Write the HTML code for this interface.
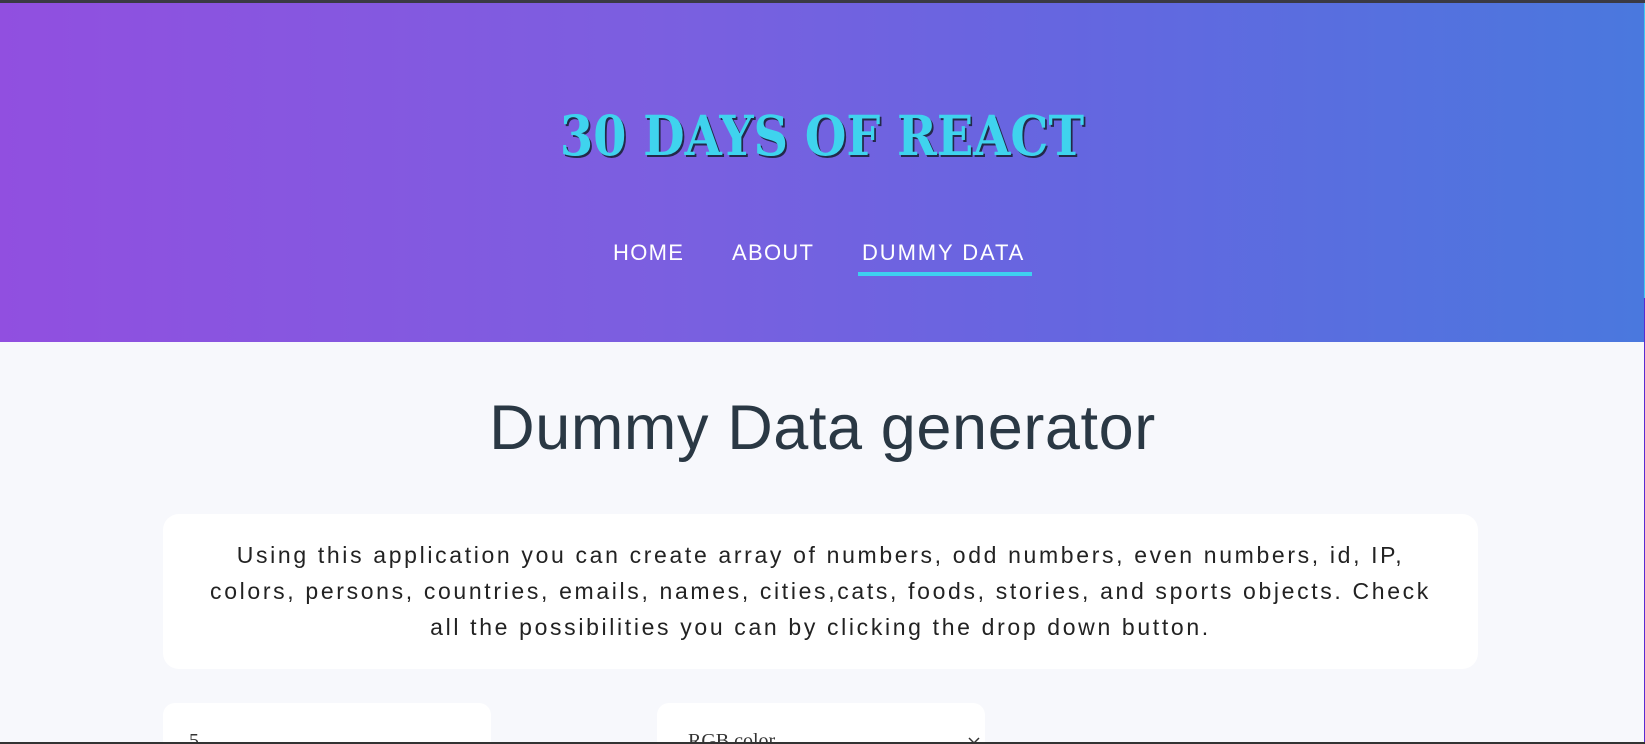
<!DOCTYPE html>
<html><head><meta charset="utf-8"><style>
*{margin:0;padding:0;box-sizing:border-box}
html{width:1645px;height:744px;overflow:hidden}
body{width:1645px;height:744px;overflow:hidden;background:#f7f8fc;position:relative;font-family:"Liberation Sans",sans-serif}
.top{position:absolute;left:0;top:0;width:1645px;height:3px;background:#3a3a44}
header{position:absolute;left:0;top:3px;width:1644px;height:339px;background:linear-gradient(90deg,#914fe0 0%,#7b5fe0 40%,#6566e0 65%,#4a78de 100%)}
h1.t{position:absolute;left:0;width:1644px;top:103px;text-align:center;font-family:"DejaVu Serif","Liberation Serif",serif;font-weight:bold;font-size:55px;color:#3fd3ee;text-shadow:2px 2px 0 #23294a;letter-spacing:0;line-height:66px;transform:scaleX(0.87);transform-origin:822px 0}
.nav{position:absolute;top:240px;font-size:22px;color:#fff;letter-spacing:1.3px;line-height:26px}
.ul{position:absolute;left:858px;top:272px;width:174px;height:4px;background:#3ed0f0}
h2{position:absolute;left:0;width:1645px;top:392px;text-align:center;font-weight:normal;font-size:63px;color:#2a3844;letter-spacing:0.6px;line-height:72px}
.card{position:absolute;left:163px;top:514px;width:1315px;height:155px;background:#fff;border-radius:16px}
.card p{position:absolute;left:-20px;width:1355px;text-align:center;font-size:23px;color:#222;letter-spacing:2.65px;line-height:36px;top:23px}
.box{position:absolute;top:703px;width:328px;height:39px;background:#fff;border-radius:12px 12px 0 0}
.v{position:absolute;top:731px;font-family:"Liberation Serif",serif;font-size:20px;color:#333;line-height:20px}
.sb{position:absolute;left:1644px;top:3px;width:1px;height:295px;background:#41c8f0}
.sb2{position:absolute;left:1644px;top:298px;width:1px;height:446px;background:#5b2bd0}
.bot{position:absolute;left:0;top:742px;width:1645px;height:2px;background:#333;z-index:5}
</style></head><body>
<div class="top"></div>
<header></header>
<h1 class="t">30 DAYS OF REACT</h1>
<div class="nav" style="left:613px">HOME</div>
<div class="nav" style="left:732px">ABOUT</div>
<div class="nav" style="left:862px;letter-spacing:1.9px">DUMMY DATA</div>
<div class="ul"></div>
<h2>Dummy Data generator</h2>
<div class="card"><p>Using this application you can create array of numbers, odd numbers, even numbers, id, IP,<br>colors, persons, countries, emails, names, cities,cats, foods, stories, and sports objects. Check<br>all the possibilities you can by clicking the drop down button.</p></div>
<div class="box" style="left:163px"></div>
<div class="box" style="left:657px"></div>
<div class="v" style="left:189px">5</div>
<div class="v" style="left:688px">RGB color</div>
<svg style="position:absolute;left:968px;top:737px" width="12" height="8"><path d="M1 1l5 5 5-5" stroke="#333" stroke-width="1.5" fill="none"/></svg>
<div class="sb"></div><div class="sb2"></div>
<div class="bot"></div>
</body></html>
